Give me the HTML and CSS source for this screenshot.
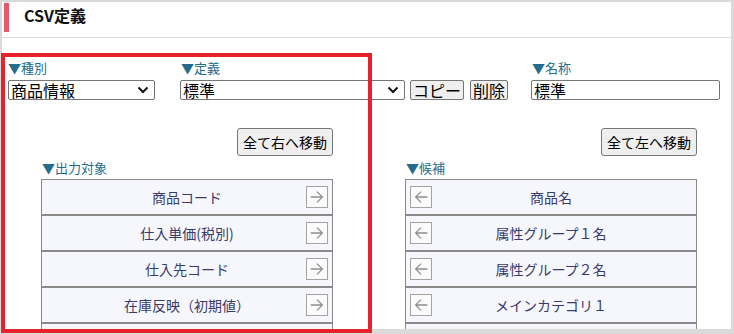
FILE: index.html
```html
<!DOCTYPE html>
<html lang="ja">
<head>
    <meta charset="UTF-8">
    <title>CSV定義</title>
    <link rel="stylesheet" href="styles.css">
</head>
<body>
    <div class="page">
        <div class="header">
            <span class="header-bar"></span>
            <h1>CSV定義</h1>
        </div>

        <div class="form-row">
            <div class="field field-kind">
                <label>▼種別</label>
                <div class="select-wrap kind-select">
                    <select>
                        <option>商品情報</option>
                    </select>
                    <svg class="chevron" viewBox="0 0 12 8"><path d="M1.5 1.5l4.5 4.5 4.5-4.5"/></svg>
                </div>
            </div>
            <div class="field field-def">
                <label>▼定義</label>
                <div class="def-controls">
                    <div class="select-wrap def-select">
                        <select>
                            <option>標準</option>
                        </select>
                        <svg class="chevron" viewBox="0 0 12 8"><path d="M1.5 1.5l4.5 4.5 4.5-4.5"/></svg>
                    </div>
                    <button class="small-btn">コピー</button>
                    <button class="small-btn">削除</button>
                </div>
            </div>
            <div class="field field-name">
                <label>▼名称</label>
                <input type="text" class="name-input" value="標準">
            </div>
        </div>

        <div class="lists">
            <div class="panel">
                <div class="panel-top">
                    <button class="move-btn">全て右へ移動</button>
                </div>
                <div class="panel-label">▼出力対象</div>
                <ul class="item-list">
                    <li class="item"><span></span><span class="item-name">商品コード</span><span class="arrow"><svg viewBox="0 0 20 20"><path d="M3 10h13M10 4l6 6-6 6"/></svg></span></li>
                    <li class="item"><span></span><span class="item-name">仕入単価(税別)</span><span class="arrow"><svg viewBox="0 0 20 20"><path d="M3 10h13M10 4l6 6-6 6"/></svg></span></li>
                    <li class="item"><span></span><span class="item-name">仕入先コード</span><span class="arrow"><svg viewBox="0 0 20 20"><path d="M3 10h13M10 4l6 6-6 6"/></svg></span></li>
                    <li class="item"><span></span><span class="item-name">在庫反映（初期値）</span><span class="arrow"><svg viewBox="0 0 20 20"><path d="M3 10h13M10 4l6 6-6 6"/></svg></span></li>
                    <li class="item"><span></span><span class="item-name"></span><span class="arrow"><svg viewBox="0 0 20 20"><path d="M3 10h13M10 4l6 6-6 6"/></svg></span></li>
                </ul>
            </div>
            <div class="panel">
                <div class="panel-top">
                    <button class="move-btn">全て左へ移動</button>
                </div>
                <div class="panel-label">▼候補</div>
                <ul class="item-list">
                    <li class="item"><span class="arrow"><svg viewBox="0 0 20 20"><path d="M17 10H4M10 4l-6 6 6 6"/></svg></span><span class="item-name">商品名</span><span></span></li>
                    <li class="item"><span class="arrow"><svg viewBox="0 0 20 20"><path d="M17 10H4M10 4l-6 6 6 6"/></svg></span><span class="item-name">属性グループ１名</span><span></span></li>
                    <li class="item"><span class="arrow"><svg viewBox="0 0 20 20"><path d="M17 10H4M10 4l-6 6 6 6"/></svg></span><span class="item-name">属性グループ２名</span><span></span></li>
                    <li class="item"><span class="arrow"><svg viewBox="0 0 20 20"><path d="M17 10H4M10 4l-6 6 6 6"/></svg></span><span class="item-name">メインカテゴリ１</span><span></span></li>
                    <li class="item"><span class="arrow"><svg viewBox="0 0 20 20"><path d="M17 10H4M10 4l-6 6 6 6"/></svg></span><span class="item-name"></span><span></span></li>
                </ul>
            </div>
        </div>
    </div>

    <!-- annotation frame -->
    <div class="highlight"></div>
</body>
</html>
```

FILE: styles.css
```css
* {
    margin: 0;
    padding: 0;
    box-sizing: border-box;
    font-family: "Noto Sans CJK JP", "Noto Sans", sans-serif;
}

body {
    background-color: #dadada;
    padding: 2px 3px 0 2px;
    height: 334px;
    overflow: hidden;
    position: relative;
}

.page {
    background-color: #fff;
    height: 327px;
    overflow: hidden;
}

.header {
    display: flex;
    align-items: flex-start;
    height: 36px;
    padding-left: 2px;
    border-bottom: 1px solid #dcdcdc;
}

.header-bar {
    width: 5px;
    height: 29px;
    margin-top: 1px;
    background-color: #e45a6b;
}

.header h1 {
    font-size: 16px;
    font-weight: bold;
    line-height: 20px;
    margin: 3px 0 0 15px;
    color: #111;
}

.form-row {
    display: flex;
    padding: 22px 0 0 5px;
}

.field label {
    display: block;
    font-size: 13px;
    line-height: 16px;
    height: 16px;
    color: #236c8c;
    margin-bottom: 4px;
    padding-left: 1px;
}

.field-kind {
    width: 173px;
}

.field-def {
    width: 351px;
}

.field-name {
    width: 190px;
}

.select-wrap {
    position: relative;
    height: 20px;
}

.select-wrap select {
    appearance: none;
    display: block;
    width: 100%;
    height: 20px;
    font-size: 16px;
    line-height: 18px;
    padding: 0 24px 0 2px;
    color: #000;
    border: 1px solid #767676;
    border-radius: 2px;
    background-color: #fff;
}

.chevron {
    position: absolute;
    right: 6px;
    top: 6px;
    width: 12px;
    height: 8px;
    fill: none;
    stroke: #111;
    stroke-width: 2;
    pointer-events: none;
}

.kind-select {
    width: 147px;
    margin-left: 1px;
}

.def-controls {
    display: flex;
    align-items: flex-start;
}

.def-select {
    width: 225px;
    margin-right: 5px;
}

.small-btn,
.name-input {
    display: block;
    font-size: 16px;
    line-height: 18px;
    height: 20px;
    color: #000;
    border: 1px solid #767676;
    border-radius: 2px;
}

.small-btn {
    background-color: #efefef;
    padding: 0 2px;
    margin-right: 6px;
}

.name-input {
    width: 189px;
    padding: 0 2px;
}

.lists {
    display: flex;
    gap: 72px;
    padding: 28px 0 0 39px;
}

.panel {
    width: 292px;
}

.panel-top {
    display: flex;
    justify-content: flex-end;
    height: 28px;
}

.move-btn {
    font-size: 14px;
    height: 28px;
    padding: 0 5px;
    background-color: #efefef;
    border: 1px solid #767676;
    border-radius: 3px;
    color: #000;
}

.panel-label {
    font-size: 13px;
    line-height: 16px;
    height: 16px;
    color: #236c8c;
    margin: 4px 0 3px 1px;
}

.item-list {
    list-style: none;
}

.item {
    display: grid;
    grid-template-columns: 22px 1fr 22px;
    align-items: center;
    height: 36px;
    padding: 0 4px;
    border: 1px solid #8a8a8a;
    background-color: #f6f7fc;
}

.item-name {
    text-align: center;
    font-size: 14px;
    color: #3a3a6a;
}

.arrow {
    display: block;
    width: 22px;
    height: 22px;
    padding: 1px;
    border: 1px solid #a3a3a3;
    background-color: #fbfbfb;
}

.arrow svg {
    display: block;
    width: 18px;
    height: 18px;
    fill: none;
    stroke: #8f8f8f;
    stroke-width: 1.4;
}

.highlight {
    position: absolute;
    left: 1px;
    top: 53px;
    width: 371px;
    height: 280px;
    border: 4px solid #e8222a;
}
```
